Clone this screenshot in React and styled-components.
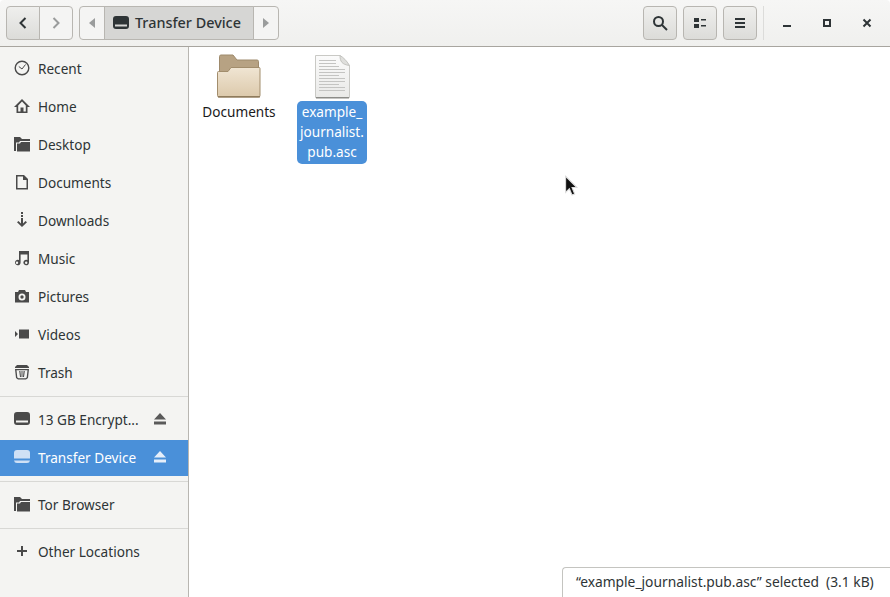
import React from 'react'
import styled, { createGlobalStyle } from 'styled-components'

const Global = createGlobalStyle`
  html, body { margin: 0; padding: 0; height: 100%; overflow: hidden; background: #fff; }
  #root { height: 100%; }
  * { box-sizing: border-box; }
`

const Window = styled.div`
  position: relative;
  width: 890px;
  height: 597px;
  display: flex;
  flex-direction: column;
  font-family: 'Noto Sans', 'Open Sans', sans-serif;
  font-size: 13.6px;
  color: #2e3436;
  overflow: hidden;
`
const HeaderBar = styled.header`
  height: 47px;
  flex: none;
  display: flex;
  align-items: center;
  padding: 6px 3px 7px 6px;
  background: linear-gradient(#f6f6f5, #f0f0ee);
  border-bottom: 1px solid #a8a59f;
  border-radius: 4px 4px 0 0;
`
const Group = styled.div`
  display: flex;
  height: 34px;
  margin-right: ${(p) => p.$mr || 0}px;
`
const NavBtn = styled.div`
  width: ${(p) => p.$w || 33}px;
  height: 34px;
  display: flex;
  align-items: center;
  justify-content: center;
  border: 1px solid #b8b6b1;
  margin-left: ${(p) => (p.$joined ? -1 : 0)}px;
  border-radius: ${(p) => p.$radius || '0'};
  color: ${(p) => (p.$dim ? '#9a9c9c' : '#2e3436')};
  background: ${(p) => (p.$flat ? '#f4f4f3' : 'linear-gradient(#efefed, #dcdcd9)')};
`
const Crumb = styled(NavBtn)`
  justify-content: flex-start;
  gap: 6px;
  padding-left: 8px;
  background: #d6d6d4;
  font-size: 14.4px;
  font-weight: 500;
  white-space: nowrap;
`
const Spacer = styled.div`
  flex: 1;
`
const ToolBtn = styled.div`
  width: 34px;
  height: 34px;
  margin-left: ${(p) => p.$ml || 0}px;
  display: flex;
  align-items: center;
  justify-content: center;
  border: 1px solid #b8b6b1;
  border-radius: 4px;
  background: linear-gradient(#efefed, #dcdcd9);
`
const Divider = styled.div`
  width: 1px;
  height: 34px;
  margin: 0 3px 0 6px;
  background: #dcdcda;
`
const WinBtn = styled.div`
  width: 40px;
  height: 34px;
  display: flex;
  align-items: center;
  justify-content: center;
`
const Body = styled.div`
  flex: 1;
  display: flex;
  min-height: 0;
`
const Sidebar = styled.nav`
  width: 189px;
  flex: none;
  padding-top: 2px;
  background: #f4f4f2;
  border-right: 1px solid #b8b6b1;
`
const Row = styled.div`
  height: ${(p) => p.$h || 38}px;
  display: flex;
  align-items: center;
  padding-left: 14px;
  padding-bottom: ${(p) => p.$pb || 0}px;
  color: ${(p) => (p.$selected ? '#fff' : '#2e3436')};
  background: ${(p) => (p.$selected ? '#4a90d9' : 'transparent')};
`
const RowIcon = styled.span`
  width: 16px;
  height: 16px;
  margin-right: 8px;
  flex: none;
  display: flex;
  color: ${(p) => (p.$selected ? '#cfe0f5' : '#4a4a4a')};
`
const RowLabel = styled.span`
  flex: 1;
  white-space: nowrap;
`
const Eject = styled.span`
  width: 12px;
  height: 12px;
  margin-right: 22px;
  display: flex;
  color: ${(p) => (p.$selected ? '#e6effa' : '#5a5a5a')};
`
const Sep = styled.div`
  height: 1px;
  margin: ${(p) => p.$m || '5px 0'};
  background: #d8d8d5;
`
const Files = styled.main`
  flex: 1;
  background: #fff;
  display: flex;
  align-items: flex-start;
  gap: 13px;
  padding: 6px 0 0 10px;
`
const FileItem = styled.div`
  width: 80px;
  display: flex;
  flex-direction: column;
  align-items: center;
`
const FileIconBox = styled.div`
  width: 48px;
  height: 48px;
  display: flex;
`
const FileLabel = styled.div`
  width: ${(p) => (p.$selected ? '70px' : '80px')};
  padding: 1px 1px 2px;
  line-height: 20px;
  text-align: center;
  border-radius: 5px;
  color: ${(p) => (p.$selected ? '#fff' : '#1a1a1a')};
  background: ${(p) => (p.$selected ? '#4a90d9' : 'transparent')};
`
const StatusFloat = styled.div`
  position: absolute;
  right: 0;
  bottom: 0;
  width: 328px;
  height: 30px;
  padding: 4px 0 0 13px;
  font-size: 13.8px;
  background: #fff;
  border: 1px solid #c4c4c0;
  border-width: 1px 0 0 1px;
  border-top-left-radius: 4px;
  white-space: nowrap;
`
const Cursor = styled.svg`
  position: absolute;
  left: 564px;
  top: 175px;
`

const Svg = ({ children, size = 16, vb = '0 0 16 16' }) => (
  <svg width={size} height={size} viewBox={vb} fill="currentColor">
    {children}
  </svg>
)

const Drive = () => (
  <Svg>
    <path fillRule="evenodd" d="M3 1h10a3 3 0 0 1 3 3v7a3 3 0 0 1-3 3H3a3 3 0 0 1-3-3V4a3 3 0 0 1 3-3zm-1 8.500v2h12v-2z" />
  </Svg>
)
const DriveSelected = () => (
  <Svg>
    <path d="M3 1h10a3 3 0 0 1 3 3v5.500H0V4a3 3 0 0 1 3-3z" />
    <path d="M0 11.500h16a3 3 0 0 1-3 2.500H3a3 3 0 0 1-3-2.500z" />
  </Svg>
)
const Clock = () => (
  <Svg>
    <circle cx="8" cy="8" r="6.800" fill="none" stroke="currentColor" strokeWidth="1.400" />
    <path d="M4.800 6.500 8 9l3.500-4.500" fill="none" stroke="currentColor" strokeWidth="1" />
  </Svg>
)
const HomeIcon = () => (
  <Svg>
    <path fillRule="evenodd" d="M8 1 0 9h2.500v6h11V9H16zM8 3.600l3.800 3.800V13.500H9.500V9.500h-3v4H4.200V7.400z" />
  </Svg>
)
const Folder = () => (
  <Svg>
    <path d="M0 1h6l2 2h8v2H6L5 6.500H2V15H0z" />
    <path d="M3 7.500h3L7 6h9v9.500H3z" />
  </Svg>
)
const Doc = () => (
  <Svg>
    <path fillRule="evenodd" d="M2 1h8l4 4v10.500H2zm1.500 1.500v11.500h9V6H9V2.500z" />
  </Svg>
)
const Download = () => (
  <Svg>
    <path d="M7 0h2v2H7zM7 3h2v2H7zM7 6h2v5.500l2.500-2.500L13 10.200 8 15l-5-4.800L4.500 9 7 11.500z" />
  </Svg>
)
const Music = () => (
  <Svg>
    <path fillRule="evenodd" d="M5 1h10v11.500a2.800 2.800 0 1 1-1.600-2.500V4.500H6.600v8a2.800 2.800 0 1 1-1.600-2.500zM3 11.500a1.200 1.200 0 1 0 0 2.400 1.200 1.200 0 0 0 0-2.400zm9.200 0a1.200 1.200 0 1 0 0 2.400 1.200 1.200 0 0 0 0-2.400z" />
  </Svg>
)
const Camera = () => (
  <Svg>
    <path fillRule="evenodd" d="M5 2h6l1 2h3v10.500H1V4h3zm3 3.500a3.500 3.500 0 1 0 0 7 3.500 3.500 0 0 0 0-7zm0 1.800a1.700 1.700 0 1 1 0 3.400 1.700 1.700 0 0 1 0-3.400z" />
  </Svg>
)
const Video = () => (
  <Svg>
    <path d="M5 3.500h10v9H5zM1 5l3 3-3 3z" />
  </Svg>
)
const Trash = () => (
  <Svg>
    <path fillRule="evenodd" d="M3 1h10l2 2v1H1V3zM1 5h14l-1 9-2 1.500H4L2 14zm1.500 1.200.8 7.300 1.200.8h7l1.200-.8.8-7.300z" />
    <path d="M5.200 7 6 13H7L6.400 7zM7.500 7h1v6h-1zM9.600 7 9 13h1l.8-6z" />
  </Svg>
)
const Plus = () => (
  <Svg>
    <path d="M7 3h2v4h4v2H9v4H7V9H3V7h4z" />
  </Svg>
)
const EjectIcon = () => (
  <Svg size={12} vb="0 0 12 12">
    <path d="M6 0 12 6.500H0zM0 8.500h12V11.500H0z" />
  </Svg>
)

const FolderLarge = () => (
  <svg width="48" height="48" viewBox="0 0 48 48">
    <defs>
      <linearGradient id="fold" x1="0" y1="0" x2="0" y2="1">
        <stop offset="0" stopColor="#f0e5d3" />
        <stop offset="1" stopColor="#dcc9ab" />
      </linearGradient>
    </defs>
    <path d="M4.500 20V3.500a1.500 1.500 0 0 1 1.500-1.500h12l4 5h20a1.500 1.500 0 0 1 1.500 1.500V20z" fill="#b7a283" stroke="#9e8a6c" />
    <path d="M2.500 19.500a1 1 0 0 1 1-1h9.500l3-4h28a1 1 0 0 1 1 1v27a1.500 1.500 0 0 1-1.500 1.500H4a1.500 1.500 0 0 1-1.500-1.500z" fill="url(#fold)" stroke="#a28d6c" />
    <rect x="3" y="43" width="42" height="1.500" fill="#8f7b5c" />
  </svg>
)

const FileLarge = () => (
  <svg width="48" height="48" viewBox="0 0 48 48">
    <defs>
      <linearGradient id="page" x1="0" y1="0" x2="0" y2="1">
        <stop offset="0" stopColor="#fbfbfb" />
        <stop offset="1" stopColor="#e9e9e7" />
      </linearGradient>
    </defs>
    <path d="M7.500 2.500H32l9.500 10V44.500H7.500z" fill="url(#page)" stroke="#c9c9c5" />
    <path d="M32 2.500c0 6 2 9 9.500 10-3-5-6-8-9.500-10z" fill="#dfdfdc" stroke="#c4c4c0" />
    {[7, 10, 13, 16, 19, 22, 25, 28, 31, 34, 37].map((y, i) => (
      <rect key={y} x="11" y={y} width={y < 13 ? 17 : i % 3 === 2 ? 20 : 26} height="1" fill="#c4c4c2" />
    ))}
    <rect x="8" y="44" width="33" height="1.500" fill="#8c8c88" />
  </svg>
)

const places = [
  ['Recent', Clock],
  ['Home', HomeIcon],
  ['Desktop', Folder],
  ['Documents', Doc],
  ['Downloads', Download],
  ['Music', Music],
  ['Pictures', Camera],
  ['Videos', Video],
  ['Trash', Trash],
]

export default function App() {
  return (
    <Window>
      <Global />
      <HeaderBar>
        <Group $mr={6}>
          <NavBtn $w={34} $radius="4px 0 0 4px">
            <svg width="16" height="16" viewBox="0 0 16 16" fill="none" stroke="currentColor" strokeWidth="2">
              <path d="M10.500 3 5.500 8l5 5" />
            </svg>
          </NavBtn>
          <NavBtn $flat $dim $joined $w={34} $radius="0 4px 4px 0">
            <svg width="16" height="16" viewBox="0 0 16 16" fill="none" stroke="currentColor" strokeWidth="2">
              <path d="M5.500 3l5 5-5 5" />
            </svg>
          </NavBtn>
        </Group>
        <Group>
          <NavBtn $flat $dim $w={26} $radius="4px 0 0 4px">
            <svg width="8" height="10" viewBox="0 0 8 10" fill="currentColor">
              <path d="M7 0v10L1 5z" />
            </svg>
          </NavBtn>
          <Crumb $joined $w={150}>
            <Drive />
            Transfer Device
          </Crumb>
          <NavBtn $flat $dim $joined $w={26} $radius="0 4px 4px 0">
            <svg width="8" height="10" viewBox="0 0 8 10" fill="currentColor">
              <path d="M1 0v10l6-5z" />
            </svg>
          </NavBtn>
        </Group>
        <Spacer />
        <ToolBtn>
          <svg width="16" height="16" viewBox="0 0 16 16" fill="none" stroke="#2e3436" strokeWidth="2">
            <circle cx="6.500" cy="6.500" r="4.500" />
            <path d="m10 10 5 5" />
          </svg>
        </ToolBtn>
        <ToolBtn $ml={6}>
          <svg width="14" height="14" viewBox="0 0 14 14" fill="#2e3436">
            <path d="M1 2h5v4H1zM1 8h5v4H1zM8 3h5v1.500H8zM8 9h5v1.500H8z" />
          </svg>
        </ToolBtn>
        <ToolBtn $ml={6}>
          <svg width="14" height="14" viewBox="0 0 14 14" fill="#2e3436">
            <path d="M2 2h10v2H2zM2 6h10v2H2zM2 10h10v2H2z" />
          </svg>
        </ToolBtn>
        <Divider />
        <WinBtn>
          <svg width="10" height="10" viewBox="0 0 10 10" fill="#2e3436">
            <path d="M1 7h8v2H1z" />
          </svg>
        </WinBtn>
        <WinBtn>
          <svg width="10" height="10" viewBox="0 0 10 10" fill="none" stroke="#2e3436" strokeWidth="2">
            <rect x="2" y="2" width="6" height="6" />
          </svg>
        </WinBtn>
        <WinBtn>
          <svg width="10" height="10" viewBox="0 0 10 10" fill="none" stroke="#2e3436" strokeWidth="2">
            <path d="m1.500 1.500 7 7M8.500 1.500l-7 7" />
          </svg>
        </WinBtn>
      </HeaderBar>
      <Body>
        <Sidebar>
          {places.map(([name, Icon]) => (
            <Row key={name}>
              <RowIcon>
                <Icon />
              </RowIcon>
              <RowLabel>{name}</RowLabel>
            </Row>
          ))}
          <Sep $m="5px 0 1px" />
          <Row $h={42}>
            <RowIcon>
              <Drive />
            </RowIcon>
            <RowLabel>13 GB Encrypt...</RowLabel>
            <Eject>
              <EjectIcon />
            </Eject>
          </Row>
          <Row $selected $h={36} $pb={2}>
            <RowIcon $selected>
              <DriveSelected />
            </RowIcon>
            <RowLabel>Transfer Device</RowLabel>
            <Eject $selected>
              <EjectIcon />
            </Eject>
          </Row>
          <Sep $m="5px 0 0" />
          <Row $h={44}>
            <RowIcon>
              <Folder />
            </RowIcon>
            <RowLabel>Tor Browser</RowLabel>
          </Row>
          <Sep $m="2px 0 0" />
          <Row $h={44}>
            <RowIcon>
              <Plus />
            </RowIcon>
            <RowLabel>Other Locations</RowLabel>
          </Row>
        </Sidebar>
        <Files>
          <FileItem>
            <FileIconBox>
              <FolderLarge />
            </FileIconBox>
            <FileLabel>Documents</FileLabel>
          </FileItem>
          <FileItem>
            <FileIconBox>
              <FileLarge />
            </FileIconBox>
            <FileLabel $selected>
              example_
              <br />
              journalist.
              <br />
              pub.asc
            </FileLabel>
          </FileItem>
        </Files>
      </Body>
      <StatusFloat>“example_journalist.pub.asc” selected&nbsp; (3.1 kB)</StatusFloat>
      <Cursor width="15" height="23" viewBox="0 0 14 21">
        <path d="M1.500 1v15l3.500-3.500 2.500 6 2.500-1-2.500-6H12z" fill="#111" stroke="#ddd" strokeWidth="1" />
      </Cursor>
    </Window>
  )
}
